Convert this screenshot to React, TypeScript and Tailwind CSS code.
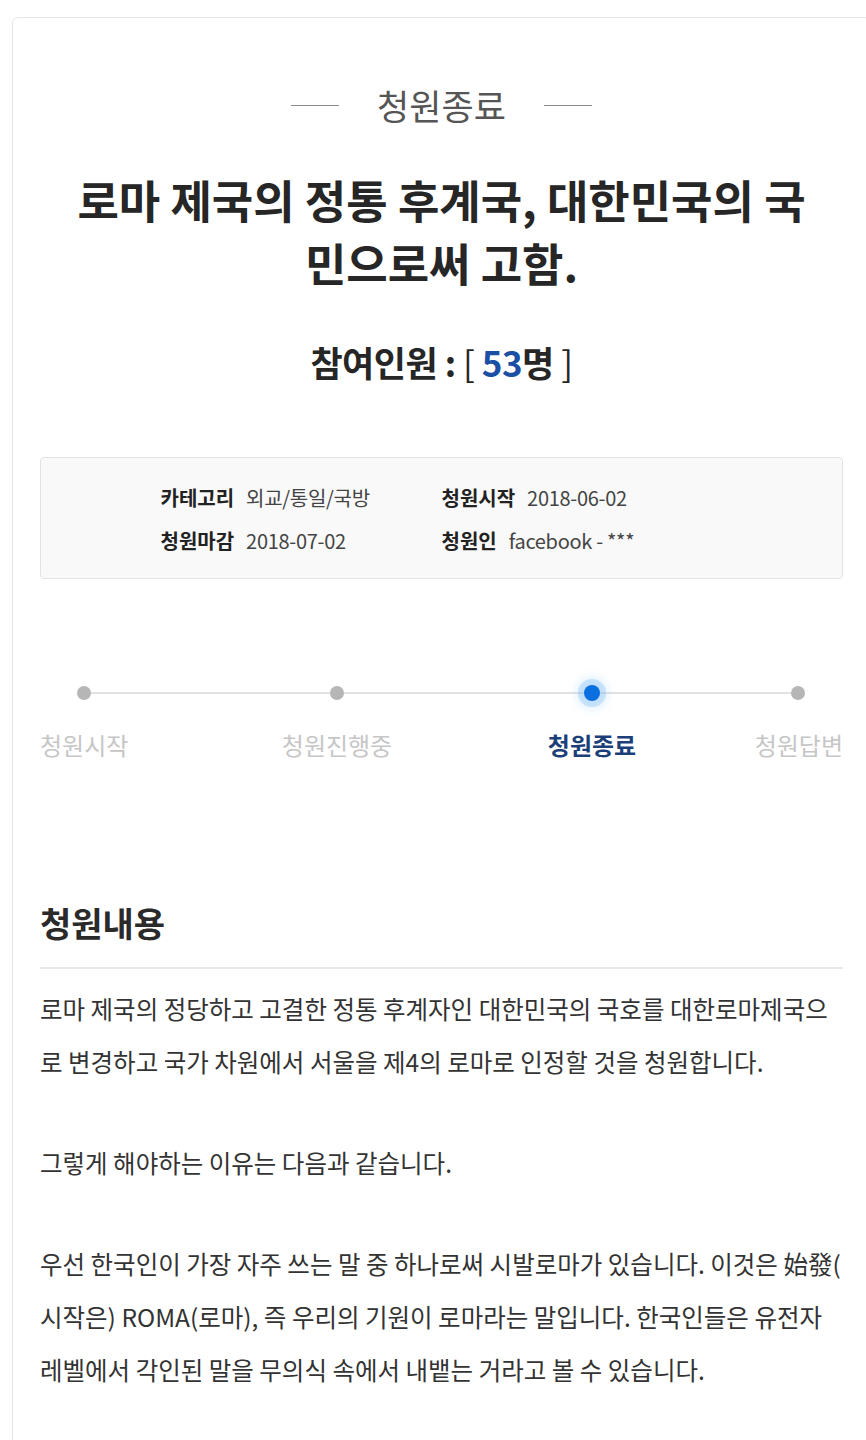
import React from "react";

const steps = [
  { label: "청원시작", box: "w-[88px] items-start", active: false },
  { label: "청원진행중", box: "w-[120px] items-center ml-[149px]", active: false },
  { label: "청원종료", box: "w-[120px] items-center ml-[135px]", active: true },
  { label: "청원답변", box: "w-[90px] items-end ml-[101px]", active: false },
];

const Dot: React.FC<{ active: boolean }> = ({ active }) =>
  active ? (
    <span className="w-4 h-4 rounded-full bg-[#0b6fe0] shadow-[0_0_0_6px_rgba(110,180,245,0.28),0_0_10px_8px_rgba(150,205,250,0.3)]" />
  ) : (
    <span className="w-[14px] h-[14px] rounded-full bg-[#b6b6b6]" />
  );

const App: React.FC = () => {
  return (
    <div
      className="w-[866px] h-[1440px] overflow-hidden bg-white text-[#333]"
      style={{ fontFamily: '"Noto Sans CJK KR", "Noto Sans", sans-serif' }}
    >
      <div className="ml-[12px] mt-[17px] w-[859px] min-h-[1500px] rounded-md border border-[#e6e6e6] bg-white px-[27px] pt-[67px]">
        {/* status */}
        <div className="flex items-center justify-center gap-[38px] h-[40px]">
          <span className="w-[48px] h-px bg-[#8a8a8a]" />
          <span className="text-[35px] leading-[40px] text-[#555]">청원종료</span>
          <span className="w-[48px] h-px bg-[#8a8a8a]" />
        </div>

        {/* title */}
        <h1 className="mx-auto mt-[43px] w-[740px] text-center text-[45px] leading-[63px] font-bold text-[#262626]">
          로마 제국의 정통 후계국, 대한민국의 국민으로써 고함.
        </h1>

        <p className="mt-[46px] text-center text-[35px] leading-[44px] font-bold text-[#262626] tracking-[-0.5px]">
          참여인원 : <span className="font-normal">[</span>{" "}
          <span className="text-[#1a4fa3]">53</span>명{" "}
          <span className="font-normal">]</span>
        </p>

        {/* info box */}
        <div className="mt-[73px] rounded border border-[#e3e3e3] bg-[#f9f9f9] pt-[18px] pb-[16px]">
          <div className="mx-auto grid w-[562px] grid-cols-2 text-[20px] leading-[43px]">
            <div>
              <span className="font-bold text-[#222]">카테고리</span>
              <span className="ml-[12px] text-[#444] tracking-[-0.3px]">외교/통일/국방</span>
            </div>
            <div>
              <span className="font-bold text-[#222]">청원시작</span>
              <span className="ml-[12px] text-[#444] tracking-[-0.3px]">2018-06-02</span>
            </div>
            <div>
              <span className="font-bold text-[#222]">청원마감</span>
              <span className="ml-[12px] text-[#444] tracking-[-0.3px]">2018-07-02</span>
            </div>
            <div>
              <span className="font-bold text-[#222]">청원인</span>
              <span className="ml-[12px] text-[#444] tracking-[-0.3px]">facebook - ***</span>
            </div>
          </div>
        </div>

        {/* progress */}
        <div className="relative mt-[98px] flex">
          <span className="absolute left-[44px] right-[45px] top-[15px] h-[2px] bg-[#e2e2e2]" />
          {steps.map((s) => (
            <div key={s.label} className={`relative flex flex-col ${s.box}`}>
              <div className="flex h-[32px] w-full items-center justify-center">
                <Dot active={s.active} />
              </div>
              <span
                className={`mt-[20px] whitespace-nowrap text-[24px] leading-[32px] ${
                  s.active ? "font-bold text-[#1c3f7a]" : "text-[#c6c6c6]"
                }`}
              >
                {s.label}
              </span>
            </div>
          ))}
        </div>

        {/* content */}
        <h2 className="mt-[140px] border-b-2 border-[#e8e8e8] pb-[22px] text-[34px] leading-[44px] font-bold text-[#2a2a2a]">
          청원내용
        </h2>

        <div className="pt-[13px] text-[24.5px] leading-[53px] text-[#333]">
          <p>
            로마 제국의 정당하고 고결한 정통 후계자인 대한민국의 국호를 대한로마제국으로 변경하고 국가 차원에서 서울을 제4의 로마로 인정할 것을 청원합니다.
          </p>
          <p className="mt-[48px]">그렇게 해야하는 이유는 다음과 같습니다.</p>
          <p className="mt-[48px]">
            우선 한국인이 가장 자주 쓰는 말 중 하나로써 시발로마가 있습니다. 이것은 始發(<wbr />시작은) ROMA(로마), 즉 우리의 기원이 로마라는 말입니다. 한국인들은 유전자 레벨에서 각인된 말을 무의식 속에서 내뱉는 거라고 볼 수 있습니다.
          </p>
        </div>
      </div>
    </div>
  );
};

export default App;
